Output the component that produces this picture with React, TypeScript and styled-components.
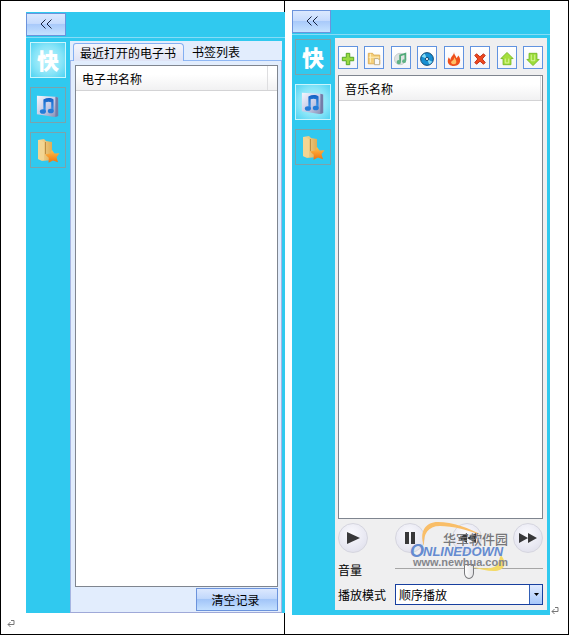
import React, { useState } from "react";
import styled, { createGlobalStyle, css } from "styled-components";

const GlobalStyle = createGlobalStyle`
  * { box-sizing: border-box; }
  body {
    margin: 0;
    background: #fff;
    color: #000;
    font: 12px/16px "Noto Sans CJK SC", sans-serif;
  }
  button, select, input { font: inherit; color: inherit; margin: 0; padding: 0; }
  button { cursor: pointer; }
`;

const Document = styled.main`
  display: grid;
  grid-template-columns: 284fr 283fr;
  min-height: 100vh;
  border: 1px solid #000;
`;

const LeftCell = styled.section`
  display: flex;
  flex-direction: column;
  border-right: 1px solid #000;
  padding: 11px 0 0 25px;
`;

const RightCell = styled.section`
  display: flex;
  align-items: flex-end;
  gap: 1px;
  padding: 9px 9px 19px 7px;
`;

const Window = styled.div<{ $side: "left" | "right" }>`
  flex: 1;
  align-self: stretch;
  display: flex;
  flex-direction: column;
  min-width: 0;
  background: #30c9ef;
  ${(p) =>
    p.$side === "left"
      ? css`margin-right: -1px; padding: 1px 3px 0 0; position: relative;`
      : css`padding: 0 3px 5px 0;`}
`;

const TitleBar = styled.header`
  display: flex;
  height: 25px;
  margin-right: -3px;
  padding-bottom: 1px;
  border-bottom: 1px solid #86dcf7;
`;

const CollapseButton = styled.button<{ $side: "left" | "right" }>`
  width: ${(p) => (p.$side === "left" ? 40 : 39)}px;
  padding-bottom: 2px;
  display: grid;
  place-items: center;
  border: 1px solid #6b93dc;
  background: linear-gradient(#dbe8fe, #c6dbfd 45%, #a9cafa 50%, #c5e2ff);
`;

const Body = styled.div`
  flex: 1;
  display: flex;
  padding-top: 3px;
`;

const SideBar = styled.nav<{ $side: "left" | "right" }>`
  flex: none;
  display: flex;
  flex-direction: column;
  gap: 9px;
  width: ${(p) => (p.$side === "left" ? 44 : 43)}px;
  padding: 1px 4px 0 ${(p) => (p.$side === "left" ? 4 : 3)}px;
`;

const SideButton = styled.button<{ $active: boolean }>`
  height: 36px;
  display: grid;
  place-items: center;
  border: 1px solid ${(p) => (p.$active ? "#c9f5fd" : "#7ba3ac")};
  background: ${(p) =>
    p.$active ? "radial-gradient(#b4f0fb 15%, #86e4f8 60%, #50d3f2)" : "transparent"};
`;

const QuickMark = styled.span`
  color: #fff;
  font-size: 22px;
  line-height: 30px;
  font-weight: 900;
  padding-bottom: 3px;
`;

const BookPane = styled.div`
  flex: 1;
  display: flex;
  flex-direction: column;
  min-width: 0;
  background: #e2edfd;
  border-bottom: 1px solid #9fa9d8;
`;

const TabList = styled.div`
  display: flex;
  height: 20px;
  padding-left: 3px;
  border-bottom: 1px solid #8fb7f4;
`;

const Tab = styled.button<{ $active: boolean }>`
  height: ${(p) => (p.$active ? 18 : 17)}px;
  margin-top: 2px;
  line-height: 16px;
  border: 1px solid transparent;
  border-bottom: 0;
  border-radius: 3px 4px 0 0;
  padding: 0 7px;
  background: transparent;
  ${(p) =>
    p.$active &&
    css`
      border-color: #83aff2;
      padding: 0 7px 0 6px;
      background: linear-gradient(#f4f5fb, #dfe3f5);
    `}
`;

const TabPanel = styled.div`
  flex: 1;
  display: flex;
  flex-direction: column;
  gap: 1px;
  padding: 4px 3px 1px 4px;
  border: 1px solid #a5b5e2;
  border-width: 0 1px;
`;

const ListBox = styled.div`
  flex: 1;
  border: 1px solid #7f858f;
  background: #fff;
`;

const Table = styled.table`
  width: 100%;
  border-collapse: collapse;
`;

const HeadCell = styled.th`
  height: 24px;
  padding: 2px 6px 0;
  text-align: left;
  font-weight: normal;
  background: linear-gradient(#fff 35%, #f1f1f2);
  border-bottom: 1px solid #d3d3d5;
  border-right: 1px solid #dedee0;
`;

const SpareCell = styled.td<{ $width: number }>`
  width: ${(p) => p.$width}px;
  padding: 0;
  background: linear-gradient(#fff 35%, #f1f1f2);
  border-bottom: 1px solid #d3d3d5;
`;

const ClearButton = styled.button`
  align-self: flex-end;
  width: 82px;
  height: 23px;
  padding-right: 3px;
  border: 1px solid #6b93dc;
  background: linear-gradient(#dce8fe, #c1d8fc 45%, #a2c5f8 50%, #c4e0ff);
`;

const MusicPane = styled.div`
  flex: 1;
  display: flex;
  flex-direction: column;
  min-width: 0;
  padding: 8px 4px 5px 3px;
  background: #efeff0;
`;

const ToolBar = styled.div`
  display: flex;
  justify-content: space-between;
  margin-bottom: 6px;
`;

const ToolButton = styled.button`
  width: 20px;
  height: 23px;
  padding-top: 3px;
  display: grid;
  place-items: center;
  border: 1px solid #6193e0;
  background: linear-gradient(#fff, #f4f5fa);
`;

const Transport = styled.div`
  position: relative;
  display: flex;
  gap: 27px;
  margin-top: 4px;
`;

const RoundButton = styled.button`
  width: 30px;
  height: 30px;
  display: grid;
  place-items: center;
  border: 1px solid #d5d5df;
  border-radius: 50%;
  background: radial-gradient(circle at 45% 35%, #fafafe, #e8e8f2 60%, #dadae6);
  &:last-of-type { margin-left: auto; }
`;

const Watermark = styled.svg`
  position: absolute;
  left: 70px;
  top: -4px;
  pointer-events: none;
`;

const Field = styled.div`
  display: grid;
  grid-template-columns: 57px 1fr;
  align-items: center;
`;

const VolumeField = styled(Field)`
  height: 31px;
  padding-top: 2px;
`;

const Volume = styled.input`
  appearance: none;
  width: 100%;
  height: 15px;
  margin-top: 3px;
  background: linear-gradient(#a6a6a6, #a6a6a6) 0 4px / 100% 1px no-repeat;
  &::-webkit-slider-thumb {
    appearance: none;
    width: 10px;
    height: 15px;
    border: 1px solid #77787c;
    border-radius: 1px 1px 5px 5px / 1px 1px 6px 6px;
    background: linear-gradient(90deg, #fff, #e3e3e6);
  }
`;

const SelectBox = styled.div`
  position: relative;
  height: 21px;
  border: 1px solid #173f9f;
  background: #fff;
`;

const Select = styled.select`
  appearance: none;
  width: 100%;
  height: 19px;
  padding: 0 16px 0 3px;
  border: 0;
  background: transparent;
`;

const SelectArrow = styled.span`
  position: absolute;
  inset: 0 0 0 auto;
  width: 13px;
  display: grid;
  place-items: center;
  border-left: 1px solid #315fb5;
  background: linear-gradient(#e0eaff, #a7c8fa);
  pointer-events: none;
`;

const MarkLine = styled.div`
  height: 21px;
  margin-left: -19px;
  padding-top: 7px;
`;

const ReturnMark = styled.svg`
  display: block;
  flex: none;
`;

const Return = () => (
  <ReturnMark width="8" height="8" viewBox="0 0 8 8" fill="none" stroke="#777" aria-hidden>
    <path d="M4 .5h3v4H1M3.5 2 1 4.5 3.5 7" />
  </ReturnMark>
);

const Chevrons = () => (
  <svg width="12" height="10" fill="none" stroke="#172340" aria-hidden>
    <path d="M5.5.5 1 5l4.500 4.500M11.500.5 7 5l4.500 4.500" />
  </svg>
);

const SideMusic = () => (
  <svg width="24" height="24" viewBox="0 0 26 26" aria-hidden>
    <defs>
      <linearGradient id="tile" x2="1" y2="1">
        <stop stopColor="#f4f5fd" /><stop offset=".55" stopColor="#c2c8e5" /><stop offset="1" stopColor="#8088ae" />
      </linearGradient>
      <linearGradient id="note" y2="1" x2="0">
        <stop stopColor="#1360c4" /><stop offset="1" stopColor="#3e9cef" />
      </linearGradient>
    </defs>
    <path d="m1 3 20 1 3 1v20l-4 1-19-3z" fill="url(#tile)" />
    <path d="m21 4 3 1v20l-3 1z" fill="#747ca7" />
    <path d="M8 7c4-2 8-2 11 0v13h-2.500V10q-3-1-6 0v10H8z" fill="url(#note)" />
    <ellipse cx="7.500" cy="20" rx="3.300" ry="2.500" fill="#237bd8" />
    <ellipse cx="16" cy="19.500" rx="3.200" ry="2.500" fill="#237bd8" />
  </svg>
);

const SideFolder = () => (
  <svg width="24" height="26" viewBox="0 0 24 26" aria-hidden>
    <defs>
      <linearGradient id="fold"><stop stopColor="#f7dda0" /><stop offset="1" stopColor="#dfad55" /></linearGradient>
      <linearGradient id="star" x2="0" y2="1"><stop stopColor="#ffc04b" /><stop offset="1" stopColor="#f0710c" /></linearGradient>
    </defs>
    <path d="m2 3 6-1 2 2 6 1v18L6 24l-4-2z" fill="url(#fold)" />
    <path d="m2 3 6 2v18l-6-1z" fill="#f3d592" />
    <path d="M9.500 5v12" stroke="#bd8e43" />
    <path d="m16 13 2.500 3.500 5-.3-3 4 1.500 5-5-1.700-4.500 2.200.3-5-3.800-3.200 5-.9z" fill="url(#star)" />
  </svg>
);

const toolIcons = [
  { label: "添加", art: <path d="M6 1.500h4V6h4.500v4H10v4.500H6V10H1.500V6H6z" fill="#99da43" stroke="#49a01c" /> },
  {
    label: "添加文件夹",
    art: (
      <>
        <path d="M1.500 1.500h5l1 2h7v10h-13z" fill="#f5d07b" stroke="#dcaa50" />
        <path d="M2 6h12M4 2v10" stroke="#fff0c2" />
        <path d="M8.500 7.500h4l2 2v5h-6z" fill="#fafafa" stroke="#b9a883" />
      </>
    ),
  },
  {
    label: "音乐",
    art: (
      <>
        <circle cx="7" cy="8" r="6.500" fill="#dfe3e2" stroke="#c4ccca" />
        <path d="M7 11V4l6-2v8" fill="none" stroke="#51aa79" strokeWidth="2" />
        <circle cx="5.500" cy="11.500" r="2.500" fill="#60b386" />
        <circle cx="11.500" cy="10.500" r="2.200" fill="#60b386" />
      </>
    ),
  },
  {
    label: "光盘",
    art: (
      <>
        <circle cx="8" cy="8" r="7.300" fill="#168ed2" stroke="#093c65" />
        <path d="M8 8 2 5A6.500 6.500 0 0 1 5.500 2zM8 8l6 3a6.500 6.500 0 0 1-3.500 3z" fill="#84dcf7" />
        <circle cx="8" cy="8" r="1.800" fill="#fff" stroke="#093c65" />
      </>
    ),
  },
  {
    label: "刻录",
    art: (
      <>
        <path d="M8 0c0 3 2 4 3 7l2-3c4 5 2 12-5 12S-.5 11 2 6l2 3C4 5 8 4 8 0z" fill="#ef501d" />
        <path d="M8 6c3 3 4 8 0 8s-4-3-2-4c2-1 2-2 2-4z" fill="#ffc066" />
      </>
    ),
  },
  { label: "删除", art: <path d="m2 4 2-2 4 3.500L12 2l2 2-3.500 4 3.500 4-2 2-4-3.500L4 14l-2-2 3.500-4z" fill="#ee4921" stroke="#b9230d" /> },
  {
    label: "上移",
    art: <><path d="m8 .5 7 7h-2.500v7h-9v-7H1z" fill="#a5df3d" stroke="#73b821" /><path d="M6 7.500v5h4v-5" fill="none" stroke="#e0f8a6" /></>,
  },
  {
    label: "下移",
    art: <><path d="m8 15.500 7-7h-2.500v-7h-9v7H1z" fill="#9bdc39" stroke="#73b821" /><path d="M6 3v7h4V3" fill="none" stroke="#e0f8a6" /></>,
  },
];

const transportIcons = [
  { label: "播放", d: "M3 2v12l13-6z" },
  { label: "暂停", d: "M4 2h4v12H4zM10 2h4v12h-4z" },
  { label: "上一首", d: "M9 3v10L0 8zM18 3v10L9 8z" },
  { label: "下一首", d: "M0 3v10l9-5zM9 3v10l9-5z" },
];

const sideItems = [
  { label: "快捷", art: <QuickMark>快</QuickMark> },
  { label: "音乐", art: <SideMusic /> },
  { label: "收藏", art: <SideFolder /> },
];

function Side({ side, active }: { side: "left" | "right"; active: number }) {
  const [current, setCurrent] = useState(active);
  return (
    <SideBar $side={side}>
      {sideItems.map((item, i) => (
        <SideButton key={item.label} aria-label={item.label} $active={i === current} onClick={() => setCurrent(i)}>
          {item.art}
        </SideButton>
      ))}
    </SideBar>
  );
}

function List({ title, spare }: { title: string; spare: number }) {
  return (
    <ListBox>
      <Table>
        <thead>
          <tr>
            <HeadCell scope="col">{title}</HeadCell>
            <SpareCell $width={spare} />
          </tr>
        </thead>
      </Table>
    </ListBox>
  );
}

function BookWindow() {
  const [tab, setTab] = useState(0);
  return (
    <Window $side="left">
      <TitleBar>
        <CollapseButton $side="left" aria-label="收起"><Chevrons /></CollapseButton>
      </TitleBar>
      <Body>
        <Side side="left" active={0} />
        <BookPane>
          <TabList role="tablist">
            {["最近打开的电子书", "书签列表"].map((name, i) => (
              <Tab key={name} role="tab" aria-selected={tab === i} $active={tab === i} onClick={() => setTab(i)}>
                {name}
              </Tab>
            ))}
          </TabList>
          <TabPanel role="tabpanel">
            <List title="电子书名称" spare={10} />
            <ClearButton>清空记录</ClearButton>
          </TabPanel>
        </BookPane>
      </Body>
    </Window>
  );
}

function MusicWindow() {
  return (
    <Window $side="right">
      <TitleBar>
        <CollapseButton $side="right" aria-label="收起"><Chevrons /></CollapseButton>
      </TitleBar>
      <Body>
        <Side side="right" active={1} />
        <MusicPane>
          <ToolBar>
            {toolIcons.map((icon) => (
              <ToolButton key={icon.label} aria-label={icon.label}>
                <svg width="14" height="14" viewBox="0 0 16 16" aria-hidden>{icon.art}</svg>
              </ToolButton>
            ))}
          </ToolBar>
          <List title="音乐名称" spare={2} />
          <Transport>
            {transportIcons.map((icon) => (
              <RoundButton key={icon.label} aria-label={icon.label}>
                <svg width="18" height="16" fill="#38383a" aria-hidden><path d={icon.d} /></svg>
              </RoundButton>
            ))}
            <Watermark width="108" height="58" viewBox="0 0 108 58" aria-hidden>
              <path d="M16 27C11 13 17 3 30 3c14 0 32 6 45 14C61 11 44 7 32 7 20 7 15 15 16 27z" fill="#f9be68" />
              <path d="M93 36c7 9 3 16-7 16-7 0-15-2-22-4 11 2 22 2 25-2 2-3 2-6 4-10z" fill="#f4da68" />
              <text x="35" y="25" fontSize="13" fill="#77777a" fontWeight="500">华军软件园</text>
              <g fontFamily="Liberation Sans, sans-serif" fontWeight="bold">
                <text x="2" y="38" fontSize="18" fontStyle="italic" fill="#658bd0">O</text>
                <text x="15" y="37" fontSize="13" fontStyle="italic" fill="#658bd0">NLINEDOWN</text>
                <text x="5" y="47" fontSize="11" fill="#85868b">www.newhua.com</text>
              </g>
            </Watermark>
          </Transport>
          <VolumeField>
            <label htmlFor="volume">音量</label>
            <Volume id="volume" type="range" min="0" max="100" defaultValue="50" />
          </VolumeField>
          <Field>
            <label htmlFor="mode">播放模式</label>
            <SelectBox>
              <Select id="mode" defaultValue="order">
                <option value="order">顺序播放</option>
                <option value="random">随机播放</option>
              </Select>
              <SelectArrow>
                <svg width="5" height="3" aria-hidden><path d="M0 0h5L2.500 3z" /></svg>
              </SelectArrow>
            </SelectBox>
          </Field>
        </MusicPane>
      </Body>
    </Window>
  );
}

export default function App() {
  return (
    <>
      <GlobalStyle />
      <Document>
        <LeftCell>
          <BookWindow />
          <MarkLine><Return /></MarkLine>
        </LeftCell>
        <RightCell>
          <MusicWindow />
          <Return />
        </RightCell>
      </Document>
    </>
  );
}
